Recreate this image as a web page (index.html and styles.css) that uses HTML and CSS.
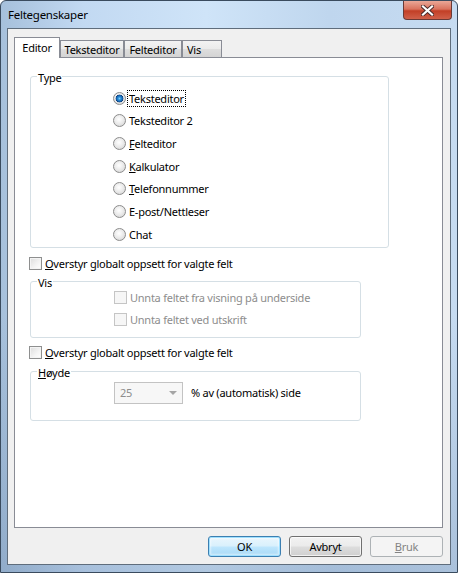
FILE: index.html
```html
<!DOCTYPE html>
<html lang="no">
<head>
<meta charset="utf-8">
<title>Feltegenskaper</title>
<link rel="stylesheet" href="styles.css">
</head>
<body>
<div class="window">
  <div class="titlebar">
    <span class="title">Feltegenskaper</span>
    <div class="close">
      <svg width="13" height="11" viewBox="0 0 13 11">
        <path d="M2 1.5 L11 9.5 M11 1.5 L2 9.5" stroke="#4a2a2a" stroke-width="4" stroke-linecap="square"/>
        <path d="M2 1.5 L11 9.5 M11 1.5 L2 9.5" stroke="#ffffff" stroke-width="2.2" stroke-linecap="square"/>
      </svg>
    </div>
  </div>
  <div class="client">
    <div class="tabs">
      <div class="tab selected">Editor</div>
      <div class="tab w-tekst">Teksteditor</div>
      <div class="tab w-felt">Felteditor</div>
      <div class="tab w-vis">Vis</div>
    </div>
    <div class="panel">
      <div class="group group-type">
        <span class="group-label">Type</span>
        <div class="radios">
          <div class="row"><span class="radio checked"></span><span class="focus">Teksteditor</span></div>
          <div class="row"><span class="radio"></span><span>Teksteditor 2</span></div>
          <div class="row"><span class="radio"></span><span><u>F</u>elteditor</span></div>
          <div class="row"><span class="radio"></span><span><u>K</u>alkulator</span></div>
          <div class="row"><span class="radio"></span><span><u>T</u>elefonnummer</span></div>
          <div class="row"><span class="radio"></span><span>E-post/Nettleser</span></div>
          <div class="row"><span class="radio"></span><span>Chat</span></div>
        </div>
      </div>

      <div class="check-row first-check"><span class="check"></span><span><u>O</u>verstyr globalt oppsett for valgte felt</span></div>

      <div class="group group-vis">
        <span class="group-label">Vis</span>
        <div class="checks">
          <div class="row disabled"><span class="check"></span><span>Unnta feltet fra visning på underside</span></div>
          <div class="row disabled"><span class="check"></span><span>Unnta feltet ved utskrift</span></div>
        </div>
      </div>

      <div class="check-row second-check"><span class="check"></span><span><u>O</u>verstyr globalt oppsett for valgte felt</span></div>

      <div class="group group-hoyde">
        <span class="group-label"><u>H</u>øyde</span>
        <div class="combo-row">
          <div class="combo"><span class="combo-value">25</span><span class="arrow"></span></div>
          <span>% av (automatisk) side</span>
        </div>
      </div>
    </div>
    <div class="buttons">
      <button class="btn default">OK</button>
      <button class="btn">Avbryt</button>
      <button class="btn disabled-btn"><u>B</u>ruk</button>
    </div>
  </div>
</div>
</body>
</html>
```
FILE: styles.css
```css
html, body {
  margin: 0;
  padding: 0;
  background: #ffffff;
}
body {
  font-family: "Segoe UI", "Noto Sans", "Open Sans", sans-serif;
  font-size: 11px;
  letter-spacing: -0.25px;
  color: #000;
}
.window {
  width: 458px;
  height: 573px;
  box-sizing: border-box;
  border: 1px solid #3a4b5e;
  border-radius: 6px 6px 0 0;
  padding: 0 6px 7px 6px;
  display: flex;
  flex-direction: column;
  background:
    linear-gradient(to bottom, rgba(255,255,255,0) 55%, rgba(70,100,140,0.22) 100%),
    linear-gradient(to right, #a6c0db 0%, #c2d9f2 18%, #cfe4f8 45%, #bfd6ee 72%, #c6dbf1 100%);
}
.titlebar {
  height: 27px;
  display: flex;
  align-items: center;
  justify-content: space-between;
}
.title {
  margin-left: 1px;
  font-size: 11.5px;
  color: #000;
}
.close {
  align-self: flex-start;
  width: 49px;
  height: 19px;
  margin-right: -1px;
  box-sizing: border-box;
  border: 1px solid #6a3a36;
  border-top: none;
  border-radius: 0 0 4px 4px;
  background: linear-gradient(to bottom, #eaa797 0%, #d9735e 45%, #c23f26 55%, #d0604a 100%);
  display: flex;
  align-items: center;
  justify-content: center;
}
.close svg {
  display: block;
}
.client {
  flex: 1;
  border: 1px solid #5f6d7c;
  background: #f0f0f0;
  display: flex;
  flex-direction: column;
  padding: 8px 7px 7px 6px;
  min-height: 0;
}
.tabs {
  display: flex;
  align-items: flex-end;
  height: 20px;
}
.tab {
  box-sizing: border-box;
  height: 17px;
  border: 1px solid #898c95;
  border-bottom: none;
  background: linear-gradient(to bottom, #f3f3f3 0%, #ebebeb 50%, #dedede 50%, #d4d4d4 100%);
  display: flex;
  align-items: center;
  justify-content: center;
  line-height: 14px;
  padding-top: 1px;
}
.tab.selected {
  width: 46px;
  height: 21px;
  background: #ffffff;
  margin-bottom: -1px;
  position: relative;
  z-index: 1;
  padding-bottom: 2px;
}
.w-tekst { width: 64px; }
.w-felt { width: 58px; }
.w-vis { width: 40px; justify-content: flex-start; padding-left: 4px; }
.panel {
  flex: 1;
  background: #ffffff;
  border: 1px solid #898c95;
  display: flex;
  flex-direction: column;
  align-items: flex-start;
  padding-top: 18px;
  min-height: 0;
}
.group {
  margin-left: 15px;
  border: 1px solid #d5dfe5;
  border-radius: 3px;
  box-sizing: border-box;
  display: flex;
  flex-direction: column;
  align-items: flex-start;
}
.group-label {
  margin-top: -7px;
  margin-left: 6px;
  padding: 0 1px;
  line-height: 15px;
  background: #ffffff;
}
.group-type {
  width: 359px;
  padding-bottom: 1px;
}
.radios {
  margin-top: 2px;
  padding-left: 82px;
  display: flex;
  flex-direction: column;
}
.row {
  display: flex;
  align-items: center;
  gap: 3px;
  line-height: 15px;
}
.radios .row {
  height: 22.67px;
}
.radio {
  width: 13px;
  height: 13px;
  box-sizing: border-box;
  border-radius: 50%;
  border: 1px solid #8c8c8c;
  background: radial-gradient(circle at 45% 40%, #ffffff 0%, #ececec 45%, #cfcfcf 100%);
  flex: none;
}
.radio.checked {
  background:
    radial-gradient(circle at 50% 50%, #7fd0ff 0px, #2b8fd8 1.5px, #1562ad 3px, #0d3f7c 3.6px, rgba(13,63,124,0) 4.2px),
    radial-gradient(circle at 45% 40%, #ffffff 0%, #ececec 45%, #cfcfcf 100%);
}
.focus {
  outline: 1px dotted #000;
  outline-offset: 0;
  padding: 0 1px;
  margin-left: -1px;
}
.check {
  width: 13px;
  height: 13px;
  box-sizing: border-box;
  border: 1px solid #8e8f8f;
  background: linear-gradient(135deg, #dcdcdc 0%, #f4f4f4 60%, #ffffff 100%);
  box-shadow: inset 0 0 0 1px #f4f4f4;
  flex: none;
}
.check-row {
  display: flex;
  align-items: center;
  gap: 3px;
  height: 16px;
  margin-left: 14px;
  line-height: 15px;
}
.first-check { margin-top: 8px; }
.second-check { margin-top: 7px; }
.group-vis {
  width: 331px;
  margin-top: 9px;
  padding-bottom: 9px;
}
.checks {
  padding-left: 83px;
  display: flex;
  flex-direction: column;
  gap: 6px;
}
.checks .row {
  height: 16px;
}
.row.disabled {
  color: #8d8d8d;
}
.row.disabled .check {
  border-color: #c5c5c5;
  background: #f6f6f6;
  box-shadow: none;
}
.group-hoyde {
  width: 331px;
  margin-top: 10px;
  padding-bottom: 16px;
}
.combo-row {
  margin-top: 2px;
  padding-left: 83px;
  display: flex;
  align-items: center;
  gap: 8px;
}
.combo {
  width: 69px;
  height: 22px;
  box-sizing: border-box;
  border: 1px solid #c3c3c3;
  background: #f7f7f7;
  display: flex;
  align-items: center;
  justify-content: space-between;
  padding: 0 5px 0 5px;
  color: #8d8d8d;
}
.arrow {
  width: 0;
  height: 0;
  border-left: 4px solid transparent;
  border-right: 4px solid transparent;
  border-top: 4px solid #a5a5a5;
}
.buttons {
  display: flex;
  justify-content: flex-end;
  gap: 8px;
  margin-top: 8px;
  height: 21px;
}
.btn {
  width: 73px;
  height: 21px;
  box-sizing: border-box;
  font-family: inherit;
  font-size: 11px;
  letter-spacing: -0.25px;
  color: #000;
  border: 1px solid #707070;
  border-radius: 3px;
  padding: 0;
  background: linear-gradient(to bottom, #f2f2f2 0%, #ebebeb 48%, #dddddd 52%, #cfcfcf 100%);
  box-shadow: inset 0 0 0 1px rgba(255,255,255,0.7);
}
.btn.default {
  border-color: #3c7fb1;
  background: linear-gradient(to bottom, #eaf6fd 0%, #d9f0fc 48%, #bee6fd 52%, #a7d9f5 100%);
  box-shadow: inset 0 0 0 1px #9fe0ff, inset 0 0 2px 2px rgba(255,255,255,0.5);
}
.btn.disabled-btn {
  border-color: #adb2b5;
  background: #f4f4f4;
  color: #838383;
  box-shadow: none;
}
```
